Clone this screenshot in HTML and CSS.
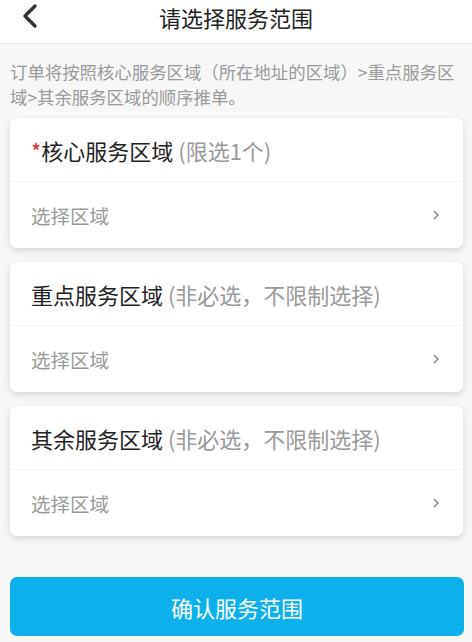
FILE: index.html
```
<!DOCTYPE html>
<html lang="zh-CN">
<head>
<meta charset="utf-8">
<link rel="stylesheet" href="styles.css">
</head>
<body>
<header class="topbar">
  <svg class="back" width="18" height="26" viewBox="0 0 18 26"><path d="M14 3 L4 13 L14 23" fill="none" stroke="#2f3338" stroke-width="3.4" stroke-linecap="round" stroke-linejoin="round"/></svg>
  <h1 class="title">请选择服务范围</h1>
</header>
<p class="note">订单将按照核心服务区域（所在地址的区域）&gt;重点服务区域&gt;其余服务区域的顺序推单。</p>
<section class="card">
  <div class="card-head"><span class="req">*</span>核心服务区域 <span class="hint">(限选1个)</span></div>
  <div class="card-row"><span>选择区域</span><svg class="chev" width="8" height="12" viewBox="0 0 8 12"><path d="M2 2 L6 6 L2 10" fill="none" stroke="#8a8a8a" stroke-width="1.5"/></svg></div>
</section>
<section class="card">
  <div class="card-head">重点服务区域 <span class="hint">(非必选，不限制选择)</span></div>
  <div class="card-row"><span>选择区域</span><svg class="chev" width="8" height="12" viewBox="0 0 8 12"><path d="M2 2 L6 6 L2 10" fill="none" stroke="#8a8a8a" stroke-width="1.5"/></svg></div>
</section>
<section class="card">
  <div class="card-head">其余服务区域 <span class="hint">(非必选，不限制选择)</span></div>
  <div class="card-row"><span>选择区域</span><svg class="chev" width="8" height="12" viewBox="0 0 8 12"><path d="M2 2 L6 6 L2 10" fill="none" stroke="#8a8a8a" stroke-width="1.5"/></svg></div>
</section>
<button class="confirm">确认服务范围</button>
</body>
</html>
```
FILE: styles.css
```
* { box-sizing: border-box; }
body {
  margin: 0;
  background: #f7f7f7;
  font-family: "Noto Sans CJK SC", "Noto Sans", sans-serif;
  color: #222;
}
.topbar {
  height: 44px;
  background: #fff;
  border-bottom: 1px solid #e9e9e9;
  display: flex;
  align-items: center;
  justify-content: center;
  position: relative;
}
.back {
  position: absolute;
  left: 21px;
  top: 3px;
}
.title {
  margin: 0;
  margin-top: -10px;
  font-size: 22px;
  font-weight: 400;
  color: #222;
}
.note {
  margin: 0;
  padding: 15px 14px 0 10px;
  font-size: 17.4px;
  line-height: 25px;
  color: #9a9a9a;
  height: 74px;
}
.card {
  background: #fff;
  margin: 0 9px 14px 10px;
  border-radius: 7px;
  box-shadow: 0 3px 7px rgba(0, 0, 0, 0.13);
}
.card-head {
  height: 64px;
  padding: 0 21px;
  display: flex;
  align-items: center;
  font-size: 22px;
  color: #222;
  border-bottom: 1px solid #f3f3f3;
  white-space: pre;
}
.req { color: #e8262a; }
.hint { color: #999; }
.card-row {
  height: 66px;
  padding: 0 23px 0 21px;
  display: flex;
  align-items: center;
  justify-content: space-between;
  font-size: 19.5px;
  color: #9a9a9a;
}
.confirm {
  display: block;
  margin: 41px 8px 0 10px;
  width: 454px;
  height: 59px;
  border: none;
  border-radius: 7px;
  background: #0cb1eb;
  color: #fff;
  font-family: "Noto Sans CJK SC", sans-serif;
  font-size: 22px;
}
```
